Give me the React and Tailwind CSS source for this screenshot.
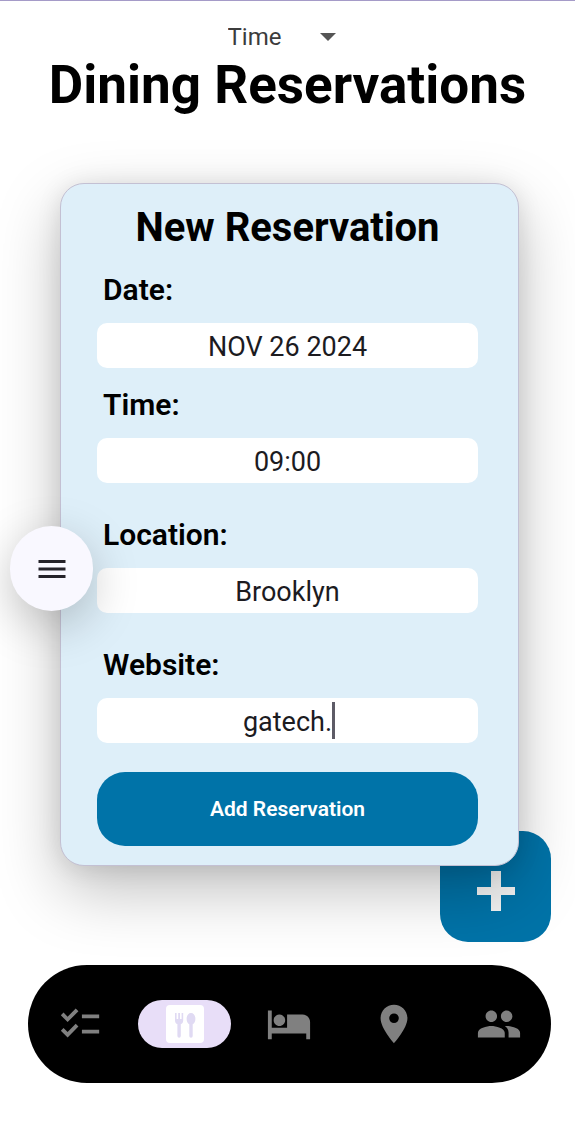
import { MdChecklist, MdHotel, MdLocationOn, MdMenu, MdPeople } from "react-icons/md";

function Field({ id, label, value, focused = false, className = "" }) {
  return (
    <div className={className}>
      <label htmlFor={id} className="block px-1.5 text-[30px] leading-9 font-semibold text-black">
        {label}
      </label>
      <div className="relative mt-[15px]">
        <input
          id={id}
          type="text"
          defaultValue={value}
          className="block h-[45px] w-full rounded-[10px] bg-white pt-0.5 text-center text-[27px] text-[#1c1b1f] caret-transparent outline-none"
        />
        {focused && (
          <span aria-hidden="true" className="absolute top-1 bottom-1 left-1/2 ml-11 w-[3px] bg-[#5d5b66]" />
        )}
      </div>
    </div>
  );
}

function DiningIcon() {
  return (
    <svg viewBox="0 0 38 38" className="size-[38px]" aria-hidden="true">
      <rect width="38" height="38" rx="4" fill="#fff" />
      <g fill="#e0daf3">
        <path d="M9 8h1.600v6h1.600V8H14v6h1.600V8h1.600v7.500c0 2-1 3.200-2.400 3.600V31a1.700 1.700 0 0 1-3.400 0V19.100C10 18.700 9 17.500 9 15.500z" />
        <path d="M25 8c2.600 0 4.400 2.500 4.400 5.800 0 2.700-1.100 4.800-2.700 5.500V31a1.700 1.700 0 0 1-3.400 0V19.300c-1.600-.7-2.700-2.800-2.700-5.500C20.600 10.500 22.400 8 25 8z" />
      </g>
    </svg>
  );
}

const tabs = [
  { label: "Checklist", icon: <MdChecklist className="size-[46px]" /> },
  { label: "Dining", icon: <DiningIcon />, active: true },
  { label: "Lodging", icon: <MdHotel className="size-[46px]" /> },
  { label: "Destinations", icon: <MdLocationOn className="size-[46px]" /> },
  { label: "Travelers", icon: <MdPeople className="size-[46px]" /> },
];

export default function App() {
  return (
    <div className="relative flex min-h-screen flex-col overflow-x-hidden border-t border-[#a59bc8] bg-white font-['Roboto',sans-serif]">
      <header className="flex flex-col items-center pt-5">
        <div className="relative flex items-center">
          <select
            aria-label="Sort by"
            defaultValue="Time"
            className="h-8 w-[120px] appearance-none bg-transparent text-[24px] leading-8 text-[#3c3c3c] outline-none"
          >
            <option>Time</option>
            <option>Date</option>
          </select>
          <svg viewBox="0 0 16 8" className="pointer-events-none absolute right-3 h-2 w-4" aria-hidden="true">
            <path d="M0 0h16L8 8z" fill="#555" />
          </svg>
        </div>
        <h1 className="text-[53px] leading-[64px] font-bold text-black">Dining Reservations</h1>
      </header>

      <main className="flex flex-col">
        <form
          onSubmit={(event) => event.preventDefault()}
          className="relative z-10 mt-[66px] mr-14 ml-[60px] flex flex-col rounded-[24px] border border-[#c3c0d3] bg-[#deeff9] pt-5 pr-10 pb-[19px] pl-9 shadow-[0_24px_64px_rgba(0,0,0,0.25),0_2px_24px_rgba(0,0,0,0.1)]"
        >
          <h2 className="text-center text-[40px] leading-[48px] font-bold text-black">New Reservation</h2>
          <Field id="date" label="Date:" value="NOV 26 2024" className="mt-5" />
          <Field id="time" label="Time:" value="09:00" className="mt-[19px]" />
          <Field id="location" label="Location:" value="Brooklyn" className="mt-[34px]" />
          <Field id="website" label="Website:" value="gatech." focused className="mt-[34px]" />
          <button type="submit" className="mt-[29px] h-[74px] rounded-[28px] bg-[#0073a8] pt-0.5 text-[21px] font-semibold text-white">
            Add Reservation
          </button>
        </form>
        <button
          type="button"
          aria-label="New reservation"
          className="-mt-[35px] mr-6 flex size-[111px] items-center justify-center self-end rounded-[28px] bg-[#0073a8]"
        >
          <svg viewBox="0 0 38 40" className="mt-2 h-10 w-[38px]" aria-hidden="true">
            <path d="M14 0h10v16h14v8H24v16H14V24H0v-8h14z" fill="#f4f4f4" />
          </svg>
        </button>
      </main>

      <nav className="relative z-10 mt-[23px] mr-6 mb-10 ml-7 flex h-[118px] items-center rounded-full bg-black">
        {tabs.map((tab) => (
          <a
            key={tab.label}
            href={`#${tab.label.toLowerCase()}`}
            aria-label={tab.label}
            aria-current={tab.active ? "page" : undefined}
            className="flex flex-1 justify-center text-[#808080]"
          >
            <span
              className={
                tab.active
                  ? "flex h-12 w-[93px] items-center justify-center rounded-full bg-[#e8def8]"
                  : "flex h-12 w-[93px] items-center justify-center"
              }
            >
              {tab.icon}
            </span>
          </a>
        ))}
      </nav>

      <button
        type="button"
        aria-label="Open menu"
        className="absolute top-[525px] left-2.5 z-20 flex h-[85px] w-[83px] items-center justify-center rounded-full bg-[#f9f8ff] text-[#25232a] shadow-[0_14px_48px_rgba(0,0,0,0.22)]"
      >
        <MdMenu className="size-9" />
      </button>
    </div>
  );
}
